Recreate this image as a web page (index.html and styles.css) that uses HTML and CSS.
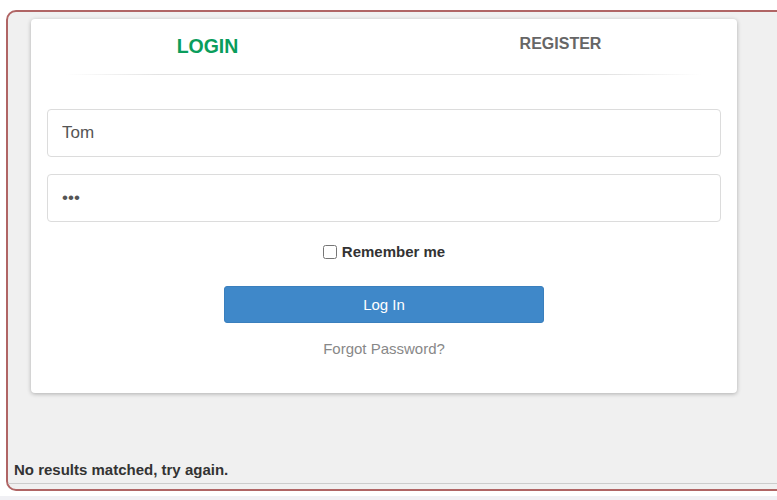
FILE: index.html
```html
<!DOCTYPE html>
<html lang="en">
<head>
<meta charset="utf-8">
<title>Login</title>
<link rel="stylesheet" href="styles.css">
</head>
<body>
<div class="frame">
  <div class="card">
    <div class="tabs">
      <div class="tab tab-active">LOGIN</div>
      <div class="tab tab-other">REGISTER</div>
    </div>
    <div class="divider"></div>
    <form class="form">
      <input class="field" type="text" value="Tom">
      <input class="field" type="password" value="abc">
      <label class="remember"><input type="checkbox" class="check"> Remember me</label>
      <button type="button" class="btn">Log In</button>
      <a class="forgot">Forgot Password?</a>
    </form>
  </div>
  <div class="status">No results matched, try again.</div>
</div>
<div class="strip"></div>
</body>
</html>
```
FILE: styles.css
```css
html, body {
  margin: 0;
  padding: 0;
  background: #ffffff;
  overflow: hidden;
  font-family: "Liberation Sans", Arial, sans-serif;
}
.frame {
  box-sizing: border-box;
  margin: 10px 0 0 6px;
  width: 800px;
  height: 481px;
  border: 2px solid #b06565;
  border-radius: 10px;
  background: #f0f0f0;
  padding: 7px 0 0 23px;
  display: flex;
  flex-direction: column;
}
.card {
  box-sizing: border-box;
  width: 706px;
  background: #fff;
  border-radius: 4px;
  box-shadow: 0 1px 4px rgba(0,0,0,0.28);
}
.tabs {
  display: grid;
  grid-template-columns: 1fr 1fr;
  height: 55px;
}
.tab {
  text-align: center;
  font-weight: bold;
}
.tab-active {
  color: #0a9d5c;
  font-size: 19.5px;
  line-height: 22px;
  padding-top: 16px;
}
.tab-other {
  color: #666;
  font-size: 16px;
  line-height: 20px;
  padding-top: 15px;
}
.divider {
  height: 1px;
  margin: 0 36px 0 34px;
  background: linear-gradient(to right, rgba(225,225,225,0), #e3e3e3 15%, #e3e3e3 85%, rgba(225,225,225,0));
}
.form {
  display: flex;
  flex-direction: column;
  align-items: center;
  padding: 34px 16px 34px;
}
.field {
  box-sizing: border-box;
  width: 100%;
  height: 48px;
  border: 1px solid #dcdcdc;
  border-radius: 4px;
  padding: 0 14px;
  font-family: "Liberation Sans", Arial, sans-serif;
  font-size: 17px;
  color: #555;
  background: #fff;
  outline: none;
}
.field + .field {
  margin-top: 17px;
}
.remember {
  margin-top: 20px;
  line-height: 20px;
  font-size: 15px;
  font-weight: bold;
  color: #333;
  display: flex;
  align-items: center;
}
.check {
  width: 14px;
  height: 14px;
  margin: 0 5px 0 0;
}
.btn {
  margin-top: 24px;
  width: 320px;
  height: 37px;
  background: #3f88c9;
  border: 1px solid #3a7fbd;
  border-radius: 3px;
  color: #fff;
  font-family: "Liberation Sans", Arial, sans-serif;
  font-size: 15px;
}
.forgot {
  margin-top: 16px;
  line-height: 20px;
  font-size: 15px;
  color: #888;
}
.status {
  margin-top: auto;
  margin-left: -23px;
  margin-bottom: 5px;
  padding: 0 0 3px 6px;
  border-bottom: 1px solid #cccccc;
  font-size: 15px;
  line-height: 20px;
  font-weight: bold;
  color: #333;
}
.strip {
  margin-top: 5px;
  height: 10px;
  background: #f0f0f4;
}
```
